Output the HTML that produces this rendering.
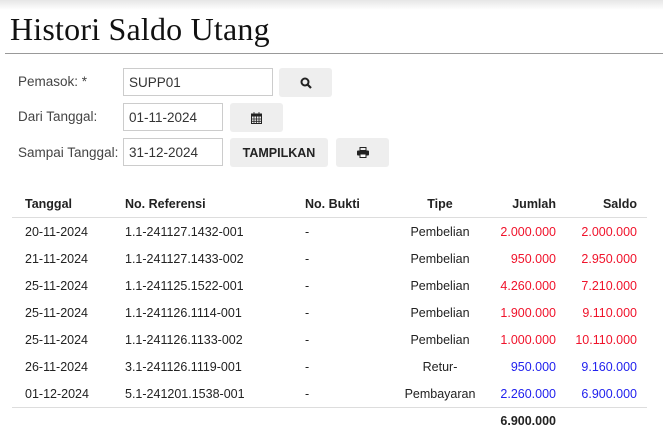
<!DOCTYPE html>
<html><head><meta charset="utf-8"><style>
body{margin:0;width:663px;height:439px;overflow:hidden;background:#fff;font-family:"Liberation Sans",sans-serif;color:#333;position:relative}
.shadow{position:absolute;left:0;top:0;width:663px;height:10px;background:linear-gradient(#e6e6e6,#fff)}
h1{position:absolute;left:10px;top:11px;margin:0;font-family:"Liberation Serif",serif;font-weight:normal;font-size:32px;color:#111;letter-spacing:0.2px}
.hr{position:absolute;left:5px;top:53px;width:658px;height:1px;background:#999}
.lbl{position:absolute;left:18px;font-size:13.5px;color:#444}
.inp{position:absolute;border:1px solid #ccc;box-sizing:border-box;font-size:13.5px;padding:6px 5px;color:#333}
.btn{position:absolute;background:#eee;border-radius:3px;box-sizing:border-box;display:flex;align-items:center;justify-content:center;font-size:12.5px;font-weight:bold;color:#222}
.t{position:absolute;font-size:12.5px;color:#222;white-space:nowrap}
.r{text-align:right}
.c{width:100px;text-align:center}
.red{color:#f0132b}.blue{color:#2222ee}
.b{font-weight:bold}
.line{position:absolute;left:12px;width:635px;height:1px;background:#ddd}
</style></head><body>
<div class="shadow"></div>
<h1>Histori Saldo Utang</h1>
<div class="hr"></div>
<div class="lbl" style="top:74px">Pemasok: *</div>
<div class="inp" style="left:123px;top:68px;width:150px;height:28px">SUPP01</div>
<div class="btn" style="left:279px;top:68px;width:53px;height:29px"><svg width="12" height="12" viewBox="0 0 12 12"><circle cx="5" cy="5" r="3.5" fill="none" stroke="#222" stroke-width="2"/><path d="M7.5 7.5L11 11" stroke="#222" stroke-width="2.2"/></svg></div>
<div class="lbl" style="top:109px">Dari Tanggal:</div>
<div class="inp" style="left:123px;top:103px;width:100px;height:28px">01-11-2024</div>
<div class="btn" style="left:230px;top:103px;width:53px;height:29px"><svg width="11" height="12" viewBox="0 0 11 12"><rect x="0.5" y="2" width="10" height="9.5" fill="none" stroke="#222"/><rect x="0.5" y="2" width="10" height="2.5" fill="#222"/><path d="M3 0v3M8 0v3M0.5 7h10M0.5 9.3h10M3 4.5v7M5.5 4.5v7M8 4.5v7" stroke="#222" stroke-width="0.8"/></svg></div>
<div class="lbl" style="top:145px">Sampai Tanggal:</div>
<div class="inp" style="left:123px;top:138px;width:100px;height:28px">31-12-2024</div>
<div class="btn" style="left:230px;top:138px;width:98px;height:29px">TAMPILKAN</div>
<div class="btn" style="left:336px;top:138px;width:53px;height:29px"><svg width="12" height="11" viewBox="0 0 12 11"><rect x="3" y="0.5" width="6" height="3" fill="none" stroke="#222"/><rect x="0" y="3.5" width="12" height="5" rx="1" fill="#222"/><rect x="3" y="7" width="6" height="3.5" fill="#fff" stroke="#222"/></svg></div>

<div class="t b" style="left:25px;top:197px">Tanggal</div>
<div class="t b" style="left:125px;top:197px">No. Referensi</div>
<div class="t b" style="left:305px;top:197px">No. Bukti</div>
<div class="t b c" style="left:390px;top:197px">Tipe</div>
<div class="t b r" style="left:456px;top:197px;width:100px">Jumlah</div>
<div class="t b r" style="left:537px;top:197px;width:100px">Saldo</div>
<div class="line" style="top:217px"></div>

<div class="t" style="left:25px;top:225px">20-11-2024</div><div class="t" style="left:125px;top:225px">1.1-241127.1432-001</div><div class="t" style="left:305px;top:225px">-</div><div class="t c" style="left:390px;top:225px">Pembelian</div><div class="t r red" style="left:456px;top:225px;width:100px">2.000.000</div><div class="t r red" style="left:537px;top:225px;width:100px">2.000.000</div>
<div class="t" style="left:25px;top:252px">21-11-2024</div><div class="t" style="left:125px;top:252px">1.1-241127.1433-002</div><div class="t" style="left:305px;top:252px">-</div><div class="t c" style="left:390px;top:252px">Pembelian</div><div class="t r red" style="left:456px;top:252px;width:100px">950.000</div><div class="t r red" style="left:537px;top:252px;width:100px">2.950.000</div>
<div class="t" style="left:25px;top:279px">25-11-2024</div><div class="t" style="left:125px;top:279px">1.1-241125.1522-001</div><div class="t" style="left:305px;top:279px">-</div><div class="t c" style="left:390px;top:279px">Pembelian</div><div class="t r red" style="left:456px;top:279px;width:100px">4.260.000</div><div class="t r red" style="left:537px;top:279px;width:100px">7.210.000</div>
<div class="t" style="left:25px;top:306px">25-11-2024</div><div class="t" style="left:125px;top:306px">1.1-241126.1114-001</div><div class="t" style="left:305px;top:306px">-</div><div class="t c" style="left:390px;top:306px">Pembelian</div><div class="t r red" style="left:456px;top:306px;width:100px">1.900.000</div><div class="t r red" style="left:537px;top:306px;width:100px">9.110.000</div>
<div class="t" style="left:25px;top:333px">25-11-2024</div><div class="t" style="left:125px;top:333px">1.1-241126.1133-002</div><div class="t" style="left:305px;top:333px">-</div><div class="t c" style="left:390px;top:333px">Pembelian</div><div class="t r red" style="left:456px;top:333px;width:100px">1.000.000</div><div class="t r red" style="left:537px;top:333px;width:100px">10.110.000</div>
<div class="t" style="left:25px;top:360px">26-11-2024</div><div class="t" style="left:125px;top:360px">3.1-241126.1119-001</div><div class="t" style="left:305px;top:360px">-</div><div class="t c" style="left:390px;top:360px">Retur-</div><div class="t r blue" style="left:456px;top:360px;width:100px">950.000</div><div class="t r blue" style="left:537px;top:360px;width:100px">9.160.000</div>
<div class="t" style="left:25px;top:387px">01-12-2024</div><div class="t" style="left:125px;top:387px">5.1-241201.1538-001</div><div class="t" style="left:305px;top:387px">-</div><div class="t c" style="left:390px;top:387px">Pembayaran</div><div class="t r blue" style="left:456px;top:387px;width:100px">2.260.000</div><div class="t r blue" style="left:537px;top:387px;width:100px">6.900.000</div>
<div class="line" style="top:407px"></div>
<div class="t b r" style="left:456px;top:414px;width:100px">6.900.000</div>
</body></html>
